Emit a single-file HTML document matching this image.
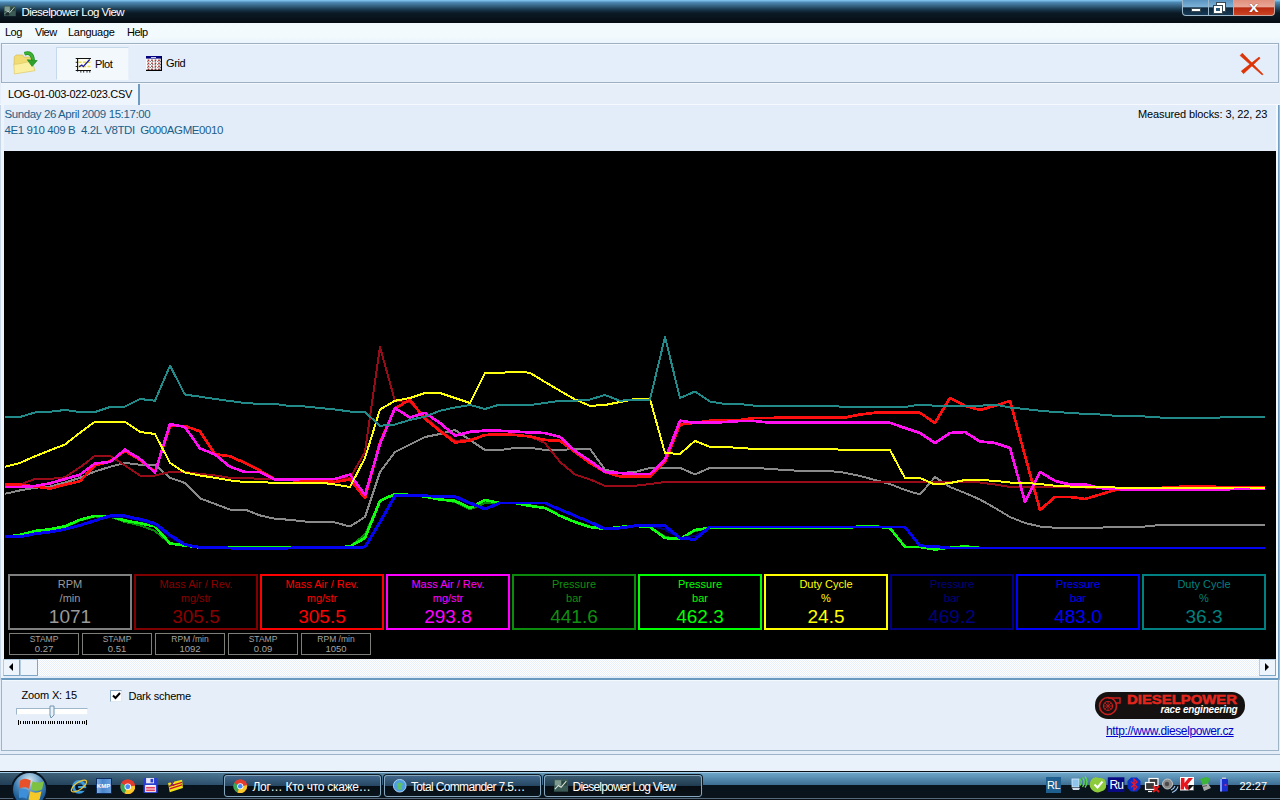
<!DOCTYPE html>
<html>
<head>
<meta charset="utf-8">
<title>Dieselpower Log View</title>
<style>
*{box-sizing:border-box;margin:0;padding:0}
html,body{width:1280px;height:800px;overflow:hidden;background:#e3edf9;font-family:"Liberation Sans",sans-serif;font-size:11px;color:#000}
.abs{position:absolute}
#titlebar{left:0;top:0;width:1280px;height:23px;background:linear-gradient(#86ccf2 0px,#6fb0dc 1px,#4d88b2 2.5px,#33607f 6px,#173449 10px,#0b1a26 13px,#060d13 23px)}
#title{left:21.5px;top:6px;color:#fff;font-size:11.5px;letter-spacing:-0.55px;white-space:nowrap}
#menubar{left:0;top:23px;width:1280px;height:20px;background:linear-gradient(#f1fbfe,#f3fafd 70%,#eaf4fb)}
.mi{top:26px;font-size:11px;white-space:nowrap;letter-spacing:-0.5px}
#toolbar{left:1px;top:43px;width:1278px;height:40px;background:#e4eefa;border:1px solid #9db1c3;box-shadow:0 1px 0 #f2f8fd,inset 0 1px 0 #f2f8fd}
#plotbtn{left:56px;top:47px;width:73px;height:33px;background:#f3f8fd;border:1px solid #c5d9ea;border-bottom-color:#f3f8fd;border-right-color:#e8f0fa}
.tb{top:58px;font-size:11px;white-space:nowrap;letter-spacing:-0.4px}
#tabrow{left:0;top:84px;width:1280px;height:21px;background:#e6eef9;border-bottom:1px solid #f6fafe}
#tab{left:1px;top:84px;width:139px;height:20.5px;background:#eff5fc;border-right:2px solid #6f9bc0}
#tabtxt{left:8px;top:87.5px;font-size:11px;white-space:nowrap;letter-spacing:-0.31px}
#info{left:0;top:105px;width:1277px;height:46px;background:#e3edf9}
.it{color:#1b5f8a;font-size:11.5px;white-space:nowrap;letter-spacing:-0.4px}
#plot{left:4px;top:151px;width:1272px;height:508px;background:#000;overflow:hidden}
.box{position:absolute;top:574px;width:124px;height:56px;border:2px solid;text-align:center;font-size:11px;line-height:14px;padding-top:1px}
.box b{display:block;font-weight:normal;font-size:19px;line-height:20px;margin-top:2px}
.sb{position:absolute;top:633px;width:70px;height:22px;border:1px solid #7e7e78;color:#a4a4a4;text-align:center;font-size:8.5px;line-height:8px;padding-top:1px}
.sb i{display:block;font-style:normal;font-size:9.5px;line-height:9px;margin-top:1px}
#hscroll{left:3px;top:659px;width:1273px;height:17px;background:conic-gradient(#fff 25%,#e6effa 0 50%,#fff 0 75%,#e6effa 0) 0 0/2px 2px}
#bottom{left:1px;top:678px;width:1278px;height:73px;background:#e5eef9;border:1px solid #9cb4c6;border-top:2px solid #6a9abf;box-shadow:inset 0 1px 0 #f4f9fe}
#status{left:0;top:754px;width:1280px;height:17px;background:#e9f1fa;border-top:1px solid #9cb4c6}
#taskbar{left:0;top:771px;width:1280px;height:29px;background:linear-gradient(#0a1016 0px,#0a1016 0.8px,#a5cde8 1px,#a5cde8 1.8px,#6ba5c8 2.2px,#3f6f95 13.6px,#08131d 14.2px,#0b141b 26.6px,#55697a 27px,#55697a 28px,#0a1016 28.2px)}
.tbtn{position:absolute;top:774.5px;height:22px;border:1px solid #86a6bd;border-radius:3px;box-shadow:0 0 0 1px #0c1822;background:linear-gradient(#41668a,#274864 48%,#070e15 52%,#0a141c);color:#fff;font-size:12px;white-space:nowrap;padding:4px 0 0 27px;overflow:hidden}
</style>
</head>
<body>
<div class="abs" id="titlebar"></div>
<svg class="abs" style="left:4px;top:5px" width="12.500" height="12" viewBox="0 0 17 16"><rect x="0" y="1" width="16" height="14" fill="#3c5a55"/><rect x="1" y="2" width="7" height="6" fill="#7f9a90"/><rect x="9" y="3" width="6" height="5" fill="#27413d"/><path d="M1 12 L5 8 L8 10 L14 3" stroke="#d8e4d8" stroke-width="1.2" fill="none"/><rect x="2" y="10" width="5" height="4" fill="#1c2c2c"/></svg>
<div class="abs" id="title">Dieselpower Log View</div>
<!-- window buttons -->
<div class="abs" style="left:1182px;top:0;width:27px;height:16px;border:1px solid #9fb9cc;border-top:none;border-radius:0 0 0 4px;background:linear-gradient(#5a93c0 0,#7db2d8 46%,#0e2538 52%,#173a56 100%)"></div>
<div class="abs" style="left:1208px;top:0;width:26px;height:16px;border:1px solid #9fb9cc;border-top:none;background:linear-gradient(#5a93c0 0,#7db2d8 46%,#0e2538 52%,#173a56 100%)"></div>
<div class="abs" style="left:1233px;top:0;width:42px;height:16px;border:1px solid #c9a9a4;border-top:none;border-radius:0 0 4px 0;background:linear-gradient(#e0907c 0,#eaa898 46%,#b82a10 52%,#cc4424 100%)"></div>
<div class="abs" style="left:1191px;top:8px;width:10px;height:4px;background:#fff;border:1px solid #3a4a55"></div>
<div class="abs" style="left:1217px;top:3px;width:8px;height:8px;border:2px solid #fff;outline:1px solid #3a4a55"></div>
<div class="abs" style="left:1214px;top:6px;width:8px;height:7px;border:2px solid #fff;background:#2c5877;outline:1px solid #3a4a55"></div>
<div class="abs" style="left:1248.5px;top:-2.5px;color:#fff;font-weight:bold;font-size:15px;transform:scaleX(1.15);transform-origin:0 0;text-shadow:0 0 1px #400">x</div>

<div class="abs" id="menubar"></div>
<div class="abs mi" style="left:5px">Log</div>
<div class="abs mi" style="left:35px">View</div>
<div class="abs mi" style="left:68px;letter-spacing:-0.3px">Language</div>
<div class="abs mi" style="left:127px">Help</div>

<div class="abs" id="toolbar"></div>
<div class="abs" id="plotbtn"></div>
<!-- folder icon -->
<svg class="abs" style="left:12px;top:50px" width="28" height="26" viewBox="0 0 28 26">
<path d="M2.300 6.600 L4.200 5 L10.700 5 L12.100 7.100 L20.100 7.100 L20.100 12 L2 15.500 Z" fill="#f1dc74" stroke="#d6bc58" stroke-width="0.7"/>
<path d="M1.900 14.300 L2.400 24 L22.900 20.700 L20.100 11 L12 12.800 L6 14 Z" fill="#fbf0a2" stroke="#dcc866" stroke-width="0.7"/>
<path d="M12.500 3.700 Q20.500 1.200 21 10.500" stroke="#1f8a22" stroke-width="3.800" fill="none"/>
<path d="M12.500 3.700 Q20.500 1.200 21 10.500" stroke="#3cb432" stroke-width="2.400" fill="none"/>
<path d="M15.300 9.800 L25.200 10.600 L20.100 16.400Z" fill="#2fa02a" stroke="#1f8a22" stroke-width="0.7"/>
</svg>
<!-- plot icon -->
<svg class="abs" style="left:75px;top:57px" width="17" height="17" viewBox="0 0 17 17">
<rect x="3" y="2" width="13" height="11.500" fill="#fdfdf2"/>
<path d="M3.500 5.300h12.500M3.500 9.500h12.500" stroke="#e6dc50" stroke-width="1.500" stroke-dasharray="3 1.500"/>
<path d="M0.700 1.500h15.300M2.600 1v13.600M0.700 13.500h15.300" stroke="#111" stroke-width="1.100" fill="none"/>
<path d="M0.700 5.300h2M0.700 9.500h2M5.850 13.500v2.100M8.700 13.500v2.100M12 13.500v2.100M14.750 13.500v2.100" stroke="#111" stroke-width="0.900"/>
<path d="M4 9.800 L6.800 8.100 L8.200 9.600 L14.750 2.500" stroke="#1a1a9a" stroke-width="1.300" fill="none"/>
</svg>
<div class="abs tb" style="left:95px">Plot</div>
<!-- grid icon -->
<svg class="abs" style="left:146px;top:56px" width="16" height="15" viewBox="0 0 16 15">
<rect x="0" y="0" width="16" height="15" fill="#fff"/>
<rect x="0" y="0" width="16" height="2.600" fill="#000080"/>
<rect x="5" y="1" width="5" height="0.800" fill="#fff"/>
<path d="M1 5.500h14M1 8.500h14M1 11.500h14" stroke="#8a8a8a" stroke-width="1.200" stroke-dasharray="1.500 1"/>
<path d="M2.500 3.500v10.500M6 3.500v10.500M9.500 3.500v10.500M13 3.500v10.500" stroke="#a83a3a" stroke-width="1.700" stroke-dasharray="1.500 1.500"/>
<path d="M15.400 0v15M0 14.400h16" stroke="#000" stroke-width="1.200"/>
</svg>
<div class="abs tb" style="left:166px;top:57px">Grid</div>
<!-- close X -->
<svg class="abs" style="left:1238px;top:52px" width="26" height="24" viewBox="0 0 26 24"><path d="M4.3 1.2 L25 22.200 L24.200 23 L2.100 3.600Z M21.100 5.100 L22.100 6.300 L5.500 21.700 L3.300 19.100Z" fill="#dc3408" stroke="#dc3408" stroke-width="0.6" stroke-linejoin="round"/></svg>

<div class="abs" id="tabrow"></div>
<div class="abs" id="tab"></div>
<div class="abs" id="tabtxt">LOG-01-003-022-023.CSV</div>
<div class="abs" id="info"></div>
<div class="abs it" style="left:4.5px;top:108px">Sunday 26 April 2009 15:17:00</div>
<div class="abs it" style="left:4.5px;top:123.5px">4E1 910 409 B&nbsp; 4.2L V8TDI&nbsp; G000AGME0010</div>
<div class="abs" style="left:1138px;top:108px;font-size:11px;white-space:nowrap;letter-spacing:-0.11px">Measured blocks: 3, 22, 23</div>
<div class="abs" style="left:1276px;top:105px;width:2px;height:575px;background:#f4f9fe"></div><div class="abs" style="left:1278px;top:105px;width:2px;height:575px;background:linear-gradient(90deg,#5f8fb8,#a6cdea)"></div><div class="abs" style="left:0;top:105px;width:1px;height:575px;background:#c8d8e8"></div><div class="abs" style="left:1px;top:105px;width:3px;height:575px;background:#eef4fb"></div>

<div class="abs" id="plot">
<svg width="1272" height="509" viewBox="0 0 1272 509" style="position:absolute;left:1px;top:-1px" shape-rendering="crispEdges">
<polyline fill="none" stroke="#8a8a8a" stroke-width="2" stroke-linejoin="round" points="0,343.8 15,340.4 30,337.8 45,336.5 60,332.5 75,327.8 90,321.5 105,316.8 120,312.9 135,314.7 150,314.7 165,327.8 180,333.0 195,348.3 210,354.0 225,359.6 240,359.6 255,365.4 270,368.8 285,369.8 300,371.5 315,372.0 330,372.5 345,376.5 360,367.0 375,322.0 390,302.0 405,294.5 420,287.0 435,284.0 450,280.0 465,290.0 480,300.0 495,300.0 510,298.0 525,297.8 540,300.0 555,300.0 570,299.0 585,299.0 600,319.5 615,323.0 630,322.0 645,318.0 660,317.8 675,317.8 690,324.5 705,317.8 720,317.8 735,317.8 750,317.8 765,319.0 780,320.0 795,320.8 810,321.0 825,321.0 840,322.8 855,326.0 870,330.0 885,334.0 900,340.0 915,344.5 930,327.0 945,337.0 960,343.0 975,349.5 990,358.0 1005,367.0 1020,373.0 1035,376.5 1050,377.8 1065,377.8 1080,377.8 1095,377.8 1110,376.5 1125,376.5 1140,376.5 1155,375.0 1170,375.0 1185,375.0 1200,375.0 1215,375.0 1230,375.0 1245,375.0 1260,375.0"/>
<polyline fill="none" stroke="#980c1a" stroke-width="2" stroke-linejoin="round" points="0,334.6 15,334.6 30,329.0 45,329.0 60,327.3 75,317.3 90,305.8 105,305.8 120,315.5 135,325.5 150,325.5 165,322.0 180,322.0 195,323.9 210,325.5 225,327.8 240,327.8 255,329.0 270,329.4 285,329.5 300,329.5 315,329.5 330,329.5 345,328.0 360,302.0 375,197.0 390,251.0 405,252.0 420,267.0 435,280.0 450,291.0 465,289.5 480,285.5 495,284.0 510,284.5 525,286.5 540,293.0 555,312.0 570,324.5 585,329.5 600,335.8 615,335.8 630,335.8 645,334.0 660,332.0 675,332.0 690,332.0 705,332.0 720,332.0 735,332.0 750,332.0 765,332.0 780,332.0 795,332.0 810,332.0 825,332.0 840,332.0 855,332.0 870,332.0 885,332.0 900,332.0 915,332.0 930,332.0 945,332.0 960,332.0 975,332.5 990,334.5 1005,337.0 1020,337.0 1035,337.0 1050,337.0 1065,337.0 1080,337.5 1095,337.5 1110,337.5 1125,338.0 1140,338.0 1155,338.0 1170,338.0 1185,338.0 1200,338.0 1215,338.0 1230,338.0 1245,338.0 1260,338.0"/>
<polyline fill="none" stroke="#ff1010" stroke-width="2.7" stroke-linejoin="round" points="0,334.6 15,334.6 30,336.5 45,338.6 60,334.6 75,331.2 90,315.5 105,311.5 120,301.0 135,310.0 150,322.0 165,276.0 180,276.0 195,281.4 210,304.2 225,306.3 240,312.9 255,320.7 270,329.4 285,330.0 300,330.8 315,330.8 330,332.0 345,329.5 360,348.0 375,292.5 390,258.0 405,250.0 420,268.8 435,281.0 450,292.5 465,290.6 480,285.0 495,284.4 510,285.0 525,286.5 540,290.0 555,290.8 570,302.0 585,313.0 600,322.0 615,326.5 630,326.5 645,326.5 660,312.0 675,274.5 690,272.8 705,270.8 720,270.0 735,270.0 750,268.0 765,268.0 780,267.5 795,267.5 810,267.5 825,267.5 840,267.5 855,264.5 870,262.8 885,262.8 900,262.8 915,262.8 930,273.0 945,247.8 960,255.8 975,260.0 990,255.8 1005,250.8 1020,305.8 1035,360.0 1050,347.0 1065,347.0 1080,349.0 1095,344.5 1110,340.0 1125,339.0 1140,339.0 1155,338.0 1170,337.0 1185,336.5 1200,336.5 1215,337.0 1230,337.0 1245,337.5 1260,337.5"/>
<polyline fill="none" stroke="#ff10f0" stroke-width="2.7" stroke-linejoin="round" points="0,337.0 15,337.0 30,336.0 45,333.3 60,329.0 75,324.7 90,313.4 105,312.0 120,299.7 135,309.0 150,322.6 165,274.0 180,277.0 195,298.4 210,304.5 225,316.8 240,322.0 255,322.0 270,329.4 285,329.4 300,329.0 315,329.0 330,329.0 345,324.5 360,345.0 375,294.0 390,258.0 405,267.5 420,262.8 435,273.0 450,285.6 465,281.9 480,280.6 495,280.8 510,281.5 525,282.5 540,283.0 555,287.0 570,300.8 585,310.8 600,322.0 615,323.0 630,324.0 645,324.0 660,309.5 675,270.8 690,272.8 705,272.8 720,272.0 735,271.0 750,271.0 765,272.8 780,272.8 795,272.8 810,272.8 825,272.8 840,272.8 855,272.8 870,272.8 885,272.8 900,278.0 915,283.0 930,293.0 945,283.0 960,282.0 975,291.5 990,293.0 1005,298.0 1020,352.0 1035,322.0 1050,330.8 1065,334.5 1080,334.5 1095,338.0 1110,339.0 1125,339.5 1140,339.5 1155,339.5 1170,339.5 1185,339.5 1200,339.5 1215,339.5 1230,339.0 1245,339.0 1260,338.5"/>
<polyline fill="none" stroke="#0a8a0a" stroke-width="2" stroke-linejoin="round" points="0,386.9 15,385.5 30,382.0 45,380.0 60,377.0 75,370.5 90,366.5 105,366.7 120,372.0 135,375.3 150,381.0 165,393.4 180,396.0 195,397.6 210,397.6 225,397.6 240,397.8 255,397.8 270,397.8 285,397.8 300,397.5 315,397.5 330,397.5 345,396.5 360,384.5 375,350.8 390,344.0 405,345.0 420,346.5 435,349.5 450,352.0 465,359.5 480,353.0 495,353.0 510,353.0 525,355.8 540,358.0 555,365.8 570,372.0 585,377.0 600,379.0 615,377.0 630,375.8 645,377.0 660,387.0 675,389.0 690,381.0 705,378.0 720,378.0 735,378.0 750,378.0 765,378.0 780,378.0 795,378.0 810,378.0 825,378.0 840,378.0 855,376.5 870,376.5 885,378.0 900,397.0 915,397.0 930,399.0 945,398.0 960,397.0 975,398.0 990,398.0 1005,398.0 1020,398.0 1035,398.0 1050,398.0 1065,398.0 1080,398.0 1095,398.0 1110,398.0 1125,398.0 1140,398.0 1155,398.0 1170,398.0 1185,398.0 1200,398.0 1215,398.0 1230,398.0 1245,398.0 1260,398.0"/>
<polyline fill="none" stroke="#10ff10" stroke-width="2.7" stroke-linejoin="round" points="0,386.9 15,385.0 30,381.0 45,379.3 60,376.4 75,369.8 90,365.9 105,365.9 120,370.6 135,373.2 150,376.4 165,393.4 180,395.5 195,397.6 210,397.6 225,397.6 240,397.8 255,397.8 270,397.8 285,397.8 300,397.5 315,397.5 330,397.5 345,396.5 360,388.0 375,350.8 390,344.0 405,345.0 420,346.5 435,349.5 450,350.8 465,358.0 480,350.0 495,353.0 510,353.0 525,355.8 540,358.0 555,365.8 570,372.0 585,377.0 600,379.0 615,377.0 630,375.8 645,377.0 660,388.0 675,389.0 690,380.0 705,378.0 720,378.0 735,378.0 750,378.0 765,378.0 780,378.0 795,378.0 810,378.0 825,378.0 840,378.0 855,376.5 870,376.5 885,378.0 900,397.0 915,397.0 930,399.5 945,397.5 960,396.5 975,398.0 990,398.0 1005,398.0 1020,398.0 1035,398.0 1050,398.0 1065,398.0 1080,398.0 1095,398.0 1110,398.0 1125,398.0 1140,398.0 1155,398.0 1170,398.0 1185,398.0 1200,398.0 1215,398.0 1230,398.0 1245,398.0 1260,398.0"/>
<polyline fill="none" stroke="#ffff10" stroke-width="2" stroke-linejoin="round" points="0,316.8 15,312.9 30,306.3 45,300.3 60,294.5 75,282.7 90,271.7 105,271.7 120,271.7 135,281.9 150,284.0 165,312.9 180,322.6 195,325.5 210,327.8 225,330.4 240,332.0 255,332.0 270,333.0 285,333.0 300,332.5 315,332.5 330,334.5 345,337.0 360,308.0 375,259.5 390,250.8 405,248.0 420,243.0 435,243.0 450,248.0 465,253.0 480,223.0 495,223.0 510,221.5 525,222.8 540,232.0 555,240.8 570,249.5 585,255.8 600,255.0 615,252.0 630,249.0 645,249.0 660,303.0 675,304.0 690,290.8 705,297.0 720,297.0 735,298.0 750,299.0 765,299.0 780,299.0 795,299.0 810,299.0 825,299.0 840,300.0 855,300.0 870,300.0 885,300.0 900,328.0 915,328.0 930,334.5 945,333.0 960,330.0 975,330.0 990,330.8 1005,332.5 1020,333.0 1035,334.0 1050,335.8 1065,336.5 1080,337.0 1095,337.0 1110,337.5 1125,338.0 1140,338.0 1155,338.0 1170,338.0 1185,337.8 1200,337.8 1215,337.8 1230,337.5 1245,337.5 1260,337.5"/>
<polyline fill="none" stroke="#000080" stroke-width="2" stroke-linejoin="round" points="0,386.9 15,386.9 30,383.7 45,382.0 60,379.3 75,375.3 90,370.6 105,366.5 120,367.0 135,370.5 150,375.0 165,387.0 180,395.0 195,397.4 210,397.6 225,398.0 240,398.7 255,398.7 270,398.5 285,398.0 300,397.5 315,397.5 330,397.5 345,397.5 360,397.0 375,372.0 390,345.8 405,345.8 420,345.8 435,346.5 450,347.5 465,354.0 480,359.0 495,353.0 510,353.0 525,353.0 540,353.0 555,359.5 570,365.8 585,372.0 600,379.0 615,378.0 630,375.8 645,375.8 660,379.5 675,388.0 690,386.0 705,377.0 720,377.0 735,377.0 750,377.0 765,377.0 780,377.0 795,377.0 810,377.0 825,377.0 840,377.0 855,377.0 870,377.0 885,377.0 900,377.0 915,395.8 930,396.5 945,398.0 960,398.0 975,398.0 990,398.0 1005,398.0 1020,398.0 1035,398.0 1050,398.0 1065,398.0 1080,398.0 1095,398.0 1110,398.0 1125,398.0 1140,398.0 1155,398.0 1170,398.0 1185,398.0 1200,398.0 1215,398.0 1230,398.0 1245,398.0 1260,398.0"/>
<polyline fill="none" stroke="#0404f0" stroke-width="2.9" stroke-linejoin="round" points="0,386.9 15,386.9 30,383.7 45,382.0 60,379.3 75,375.3 90,370.6 105,365.9 120,365.9 135,369.3 150,373.2 165,385.0 180,394.7 195,397.4 210,397.6 225,398.0 240,398.7 255,398.7 270,398.5 285,398.0 300,397.5 315,397.5 330,397.5 345,397.5 360,397.0 375,372.0 390,345.8 405,345.8 420,345.8 435,346.5 450,346.5 465,353.0 480,359.0 495,353.0 510,353.0 525,353.0 540,353.0 555,359.5 570,365.8 585,372.0 600,379.0 615,378.0 630,375.8 645,375.8 660,375.8 675,388.0 690,389.5 705,377.0 720,377.0 735,377.0 750,377.0 765,377.0 780,377.0 795,377.0 810,377.0 825,377.0 840,377.0 855,377.0 870,377.0 885,377.0 900,377.0 915,395.8 930,396.5 945,398.0 960,398.0 975,398.0 990,398.0 1005,398.0 1020,398.0 1035,398.0 1050,398.0 1065,398.0 1080,398.0 1095,398.0 1110,398.0 1125,398.0 1140,398.0 1155,398.0 1170,398.0 1185,398.0 1200,398.0 1215,398.0 1230,398.0 1245,398.0 1260,398.0"/>
<polyline fill="none" stroke="#238a8a" stroke-width="2" stroke-linejoin="round" points="0,267.0 15,267.0 30,262.5 45,261.7 60,260.0 75,262.0 90,262.0 105,257.0 120,256.5 135,249.0 150,250.7 165,215.7 180,244.6 195,246.7 210,249.0 225,251.0 240,253.0 255,254.0 270,254.0 285,256.0 300,256.5 315,258.0 330,259.5 345,261.5 360,262.0 375,275.8 390,274.5 405,270.0 420,266.5 435,260.8 450,257.5 465,255.0 480,259.0 495,254.5 510,255.0 525,255.0 540,253.0 555,250.8 570,250.8 585,249.5 600,245.0 615,250.8 630,249.5 645,249.5 660,187.0 675,248.0 690,241.5 705,251.5 720,254.0 735,254.0 750,255.8 765,255.8 780,255.8 795,255.8 810,255.8 825,255.8 840,257.0 855,257.0 870,257.0 885,257.0 900,257.0 915,254.5 930,255.8 945,255.8 960,255.8 975,255.8 990,254.5 1005,257.5 1020,259.0 1035,260.8 1050,262.0 1065,262.8 1080,264.0 1095,264.5 1110,265.8 1125,265.8 1140,266.5 1155,267.5 1170,267.5 1185,267.5 1200,267.5 1215,267.5 1230,267.0 1245,267.0 1260,267.0"/>
</svg>
</div>
<div class="box" style="left:8px;border-color:#808080;color:#9a9a9a">RPM<br>/min<b>1071</b></div>
<div class="box" style="left:134px;border-color:#800000;color:#8b0000">Mass Air / Rev.<br>mg/str<b>305.5</b></div>
<div class="box" style="left:260px;border-color:#ff0000;color:#ff0000">Mass Air / Rev.<br>mg/str<b>305.5</b></div>
<div class="box" style="left:386px;border-color:#ff00ff;color:#ff00ff">Mass Air / Rev.<br>mg/str<b>293.8</b></div>
<div class="box" style="left:512px;border-color:#0c8c0c;color:#109010">Pressure<br>bar<b>441.6</b></div>
<div class="box" style="left:638px;border-color:#00ff00;color:#00ff00">Pressure<br>bar<b>462.3</b></div>
<div class="box" style="left:764px;border-color:#ffff00;color:#ffff00">Duty Cycle<br>%<b>24.5</b></div>
<div class="box" style="left:890px;border-color:#000080;color:#000080">Pressure<br>bar<b>469.2</b></div>
<div class="box" style="left:1016px;border-color:#0000ff;color:#0000ff">Pressure<br>bar<b>483.0</b></div>
<div class="box" style="left:1142px;border-color:#008080;color:#008080">Duty Cycle<br>%<b>36.3</b></div>

<div class="sb" style="left:9px">STAMP<i>0.27</i></div>
<div class="sb" style="left:82px">STAMP<i>0.51</i></div>
<div class="sb" style="left:155px">RPM /min<i>1092</i></div>
<div class="sb" style="left:228px">STAMP<i>0.09</i></div>
<div class="sb" style="left:301px">RPM /min<i>1050</i></div>

<div class="abs" id="hscroll"></div>
<div class="abs" style="left:3px;top:659px;width:17px;height:17px;background:#eef4fb;border:1px solid #b5cde0;border-right-color:#7fa6c4;border-bottom-color:#7fa6c4"></div>
<div class="abs" style="left:20px;top:659px;width:18px;height:17px;background:#eef4fb;border:1px solid #b5cde0;border-right-color:#7fa6c4;border-bottom-color:#7fa6c4"></div>
<div class="abs" style="left:1259px;top:659px;width:17px;height:17px;background:#eef4fb;border:1px solid #b5cde0;border-right-color:#7fa6c4;border-bottom-color:#7fa6c4"></div>
<svg class="abs" style="left:8px;top:663px" width="6" height="9"><path d="M5 0 L5 8 L1 4 Z" fill="#000"/></svg>
<svg class="abs" style="left:1264px;top:663px" width="6" height="9"><path d="M1 0 L1 8 L5 4 Z" fill="#000"/></svg>

<div class="abs" id="bottom"></div>
<div class="abs" style="left:21.5px;top:688.8px;font-size:11px;white-space:nowrap;letter-spacing:-0.15px">Zoom X: 15</div>
<div class="abs" style="left:16px;top:708px;width:72px;height:7px;background:#fff;border:1px solid #9db6c9;border-bottom-color:#e8f0f8;border-right-color:#e8f0f8"></div>
<svg class="abs" style="left:48px;top:705px" width="8" height="14"><path d="M2 1 L6 1 L6 10 L3 13 L2 10 Z" fill="#e8f1fa" stroke="#6f93ad" stroke-width="1"/></svg>
<div class="abs" style="left:18px;top:721px;width:69px;height:3px;background:repeating-linear-gradient(90deg,#000 0,#000 1px,transparent 1px,transparent 2.27px)"></div>
<div class="abs" style="left:18px;top:720px;width:1px;height:5px;background:#000"></div>
<div class="abs" style="left:86px;top:720px;width:1px;height:5px;background:#000"></div>
<div class="abs" style="left:110px;top:690px;width:12px;height:12px;background:#fff;border:1px solid #8aa9c2;border-right-color:#dfeaf5;border-bottom-color:#dfeaf5"></div>
<svg class="abs" style="left:112px;top:692px" width="9" height="9"><path d="M1 3.5 L3.5 6 L8 1" stroke="#000" stroke-width="2" fill="none"/></svg>
<div class="abs" style="left:128.5px;top:689.5px;font-size:11px;white-space:nowrap;letter-spacing:-0.22px">Dark scheme</div>

<!-- logo -->
<div class="abs" style="left:1095px;top:692px;width:150px;height:27px;background:#151111;border-radius:13px"></div>
<svg class="abs" style="left:1098px;top:695px" width="24" height="22" viewBox="0 0 24 22"><circle cx="10" cy="11" r="8.5" fill="none" stroke="#c81e1e" stroke-width="1.6"/><circle cx="10" cy="11" r="4.5" fill="none" stroke="#c81e1e" stroke-width="1.2"/><path d="M10 3 L22 3 L22 8 L17 8" fill="none" stroke="#c81e1e" stroke-width="1.5"/><path d="M10 6.5v9M5.5 11h9M7 8l6 6M13 8l-6 6" stroke="#c81e1e" stroke-width="0.8"/></svg>
<div class="abs" style="left:1127px;top:692px;color:#e3261d;font-weight:bold;font-size:13px;line-height:15px;white-space:nowrap;transform-origin:0 0;transform:scaleX(1.145);-webkit-text-stroke:0.5px #e3261d">DIESELPOWER</div>
<div class="abs" style="left:1160.5px;top:704px;color:#fff;font-weight:bold;font-style:italic;font-size:10px;line-height:11px;white-space:nowrap;letter-spacing:-0.19px">race engineering</div>
<div class="abs" style="left:1106px;top:724px;color:#0000c8;font-size:12px;text-decoration:underline;white-space:nowrap;letter-spacing:-0.39px">http://www.dieselpower.cz</div>

<div class="abs" id="status"></div>
<div class="abs" id="taskbar"></div>
<!-- start orb -->
<div class="abs" style="left:0;top:773px;width:700px;height:12.6px;background:linear-gradient(90deg,rgba(5,15,25,0.5) 0,rgba(5,15,25,0.3) 230px,rgba(5,15,25,0) 700px)"></div>
<div class="abs" style="left:11px;top:771px;width:37px;height:37px;border-radius:50%;background:radial-gradient(circle at 50% 22%,#d4e6f2 0,#8fb8d6 22%,#3f7db0 48%,#1d5a94 70%,#2b7ac0 100%);border:2.5px solid #0a1622"></div>
<svg class="abs" style="left:18.8px;top:776.5px" width="26" height="26" viewBox="0 0 22 22">
<path d="M1 3 Q5 0 10 3 L8.5 10 Q4.5 7.5 0 10 Z" fill="#e8502a"/>
<path d="M11.5 3.5 Q16 6 21 3.5 L19.5 10.5 Q15 13 10 10.5 Z" fill="#7fc241"/>
<path d="M-0.3 11.5 Q4 9 8 11.5 L6.5 18.5 Q2.5 16 -1.8 18.5 Z" fill="#3c8fd8"/>
<path d="M9.5 12 Q14 14.5 19 12 L17.5 19 Q13 21.5 8 19 Z" fill="#f6c928"/>
</svg>
<!-- quick launch -->
<svg class="abs" style="left:70px;top:777px" width="18" height="18" viewBox="0 0 20 20"><circle cx="10" cy="11" r="6" fill="none" stroke="#3a9be0" stroke-width="3.4"/><rect x="9" y="10" width="9" height="2.4" fill="#3a9be0"/><rect x="12" y="12.4" width="7" height="3" fill="#0b1a26"/><ellipse cx="10" cy="10" rx="10" ry="4" fill="none" stroke="#e8c43a" stroke-width="1.4" transform="rotate(-35 10 10)"/></svg>
<div class="abs" style="left:95.5px;top:778px;width:16px;height:16px;background:linear-gradient(90deg,#7fb0e4,#4a86cc 40%,#6a9fdc);border:1px solid #0c2a5c;color:#fff;font-size:6px;font-weight:bold;line-height:15px;text-align:center">KMP</div>
<svg class="abs" style="left:119.5px;top:778.5px" width="15.5" height="15.5" viewBox="0 0 17 17"><circle cx="8.5" cy="8.5" r="8" fill="#e33b2e"/><path d="M8.5 8.5 L1.6 4.5 A8 8 0 0 0 5 15.7 Z" fill="#3aa757"/><path d="M8.5 8.5 L5 15.7 A8 8 0 0 0 16.4 7 Z" fill="#f7c92a"/><path d="M8.5 8.5 L16.4 7 A8 8 0 0 0 1.6 4.5 Z" fill="#e33b2e"/><circle cx="8.5" cy="8.5" r="3.6" fill="#fff"/><circle cx="8.5" cy="8.5" r="2.7" fill="#4a8af4"/></svg>
<svg class="abs" style="left:143px;top:778px" width="15" height="15" viewBox="0 0 16 17"><rect x="0" y="0" width="16" height="17" rx="1" fill="#2a3fd0"/><rect x="3" y="0" width="9" height="6" fill="#e8e8f4"/><rect x="8" y="1" width="3" height="4" fill="#2a3fd0"/><rect x="2" y="8" width="12" height="8" fill="#fff"/><rect x="3" y="10" width="10" height="2" fill="#e04060"/><rect x="3" y="13" width="10" height="2" fill="#e04060"/></svg>
<svg class="abs" style="left:166.5px;top:778.5px" width="17" height="14" viewBox="0 0 20 17"><path d="M1 5 L18 1 L19 11 L3 16 Z" fill="#f2e21a"/><path d="M2 9 L18 4 M3 12 L18 7" stroke="#c8102e" stroke-width="1.6"/><path d="M4 3 L8 8 M8 3 L4 8" stroke="#5a2a8a" stroke-width="1.4"/></svg>

<div class="tbtn" style="left:223.5px;width:157px;letter-spacing:-0.27px;padding-left:28px">Лог… Кто что скаже…</div>
<div class="tbtn" style="left:383.5px;width:157px;letter-spacing:-0.66px;padding-left:26.5px">Total Commander 7.5…</div>
<div class="tbtn" style="left:543.5px;width:158px;letter-spacing:-0.78px;padding-left:28px;background:linear-gradient(#3a5a70,#203c50 48%,#060c12 52%,#0a1218)">Dieselpower Log View</div>
<svg class="abs" style="left:233px;top:778.5px" width="14.5" height="14.5" viewBox="0 0 17 17"><circle cx="8.5" cy="8.5" r="8" fill="#e33b2e"/><path d="M8.5 8.5 L1.6 4.5 A8 8 0 0 0 5 15.7 Z" fill="#3aa757"/><path d="M8.5 8.5 L5 15.7 A8 8 0 0 0 16.4 7 Z" fill="#f7c92a"/><path d="M8.5 8.5 L16.4 7 A8 8 0 0 0 1.6 4.5 Z" fill="#e33b2e"/><circle cx="8.5" cy="8.5" r="3.6" fill="#fff"/><circle cx="8.5" cy="8.5" r="2.7" fill="#4a8af4"/></svg>
<svg class="abs" style="left:393px;top:779px" width="13.5" height="13.5" viewBox="0 0 16 16"><circle cx="8" cy="8" r="7.5" fill="#4f9fe0" stroke="#bfe0f8" stroke-width="1"/><path d="M4 6 Q8 2 12 6 Q9 9 11 12 Q7 14 5 11 Q7 8 4 6Z" fill="#5fc06a"/></svg>
<svg class="abs" style="left:554px;top:778px" width="15" height="15" viewBox="0 0 17 16"><rect x="0" y="1" width="16" height="14" fill="#3c5a55"/><rect x="1" y="2" width="7" height="6" fill="#7f9a90"/><rect x="9" y="3" width="6" height="5" fill="#27413d"/><path d="M1 12 L5 8 L8 10 L14 3" stroke="#d8e4d8" stroke-width="1.2" fill="none"/></svg>

<!-- tray -->
<div class="abs" style="left:1046px;top:777px;width:15px;height:16px;background:#1f5f8f;color:#fff;font-size:11px;line-height:16px;text-align:center;letter-spacing:-0.5px">RL</div>
<svg class="abs" style="left:1069px;top:776px" width="200" height="20" viewBox="0 0 200 20">
<rect x="3" y="3" width="7" height="8" fill="#8fc4ec" stroke="#d8ecfc" stroke-width="0.8"/><path d="M4 14 h6 l1 -2 h-8z" fill="#d0dce8"/><path d="M11 3 q2.5 3 0 6.5 M13.5 1.500 q3.500 4.500 0 9.500 M16 0.500 q4 5.500 0 11" stroke="#5fd84a" stroke-width="1.300" fill="none"/>
<path d="M22 4 Q25 0 30 2 Q37 1 37 8 Q38 14 32 15.500 Q27 18 23 14 Q19 10 22 4Z" fill="#8ecb3c"/><path d="M25.500 8.500 l3 3 l5 -6" stroke="#fff" stroke-width="2" fill="none"/>
<rect x="38.800" y="1.300" width="16.600" height="14.700" fill="#0a0a82"/>
<path d="M62 1.500 h6 l3.500 3.500 v7 l-3.500 3.500 h-6 l-3.500 -3.500 v-7z" fill="#0a30c8"/><path d="M62 5.500 l6 5.500 l-3 3 v-11 l3 3 l-6 5.500" stroke="#e8182a" stroke-width="1.300" fill="none"/>
<rect x="80" y="2.500" width="9" height="7" fill="#3a3a3a" stroke="#fff" stroke-width="1.200"/><rect x="76.500" y="6.500" width="9" height="7" fill="#3a3a3a" stroke="#fff" stroke-width="1.200"/><path d="M79 15.500 h4" stroke="#fff" stroke-width="1.200"/><path d="M84 10 l6 6 M90 10 l-6 6" stroke="#e81818" stroke-width="2"/>
<circle cx="98.500" cy="8" r="5" fill="#8a8a8a" stroke="#c8c8c8" stroke-width="1"/><circle cx="98" cy="8" r="2.200" fill="#4a4a4a"/><path d="M102 14 q3 -1 4 -4 M103 16.500 q4.500 -1.500 6 -6" stroke="#9cc4ec" stroke-width="1.100" fill="none"/>
<path d="M111 1 h14 v13.500 h-14z" fill="#fff"/><path d="M112 2 h3.500 v5 l4 -5 h4.500 l-5.500 6.500 l3 5 h-4.500 l-2 -3.500 v3.500 h-3.500z" fill="#e8141e"/><rect x="119.500" y="9" width="5.500" height="5.500" fill="#111"/><path d="M120 14 l4.500 -4.500 v4.500z" fill="#fff"/>
<path d="M131 3 l6 -2 l4 1.500 l-2 5 l-5 2 z" fill="#3fb43a"/><path d="M133 9 l6 -1.500 l3 4.500 l-7 3 z" fill="#a8aca8"/><path d="M134 10.500 l4 -1" stroke="#555" stroke-width="1"/>
<rect x="151" y="3" width="8" height="12.500" rx="1" fill="#1a2ccc"/><rect x="151" y="3" width="2" height="12.500" fill="#7f9cf4"/><rect x="153" y="1.500" width="4" height="1.500" fill="#c0c8d8"/><circle cx="156.500" cy="9" r="1.100" fill="#e82a6a"/>
</svg>
<div class="abs" style="left:1108px;top:777.5px;color:#fff;font-size:12px;width:16.5px;text-align:center;letter-spacing:-0.8px">Ru</div>
<div class="abs" style="left:1239.5px;top:780px;color:#fff;font-size:11px;letter-spacing:0px">22:27</div>
</body>
</html>
